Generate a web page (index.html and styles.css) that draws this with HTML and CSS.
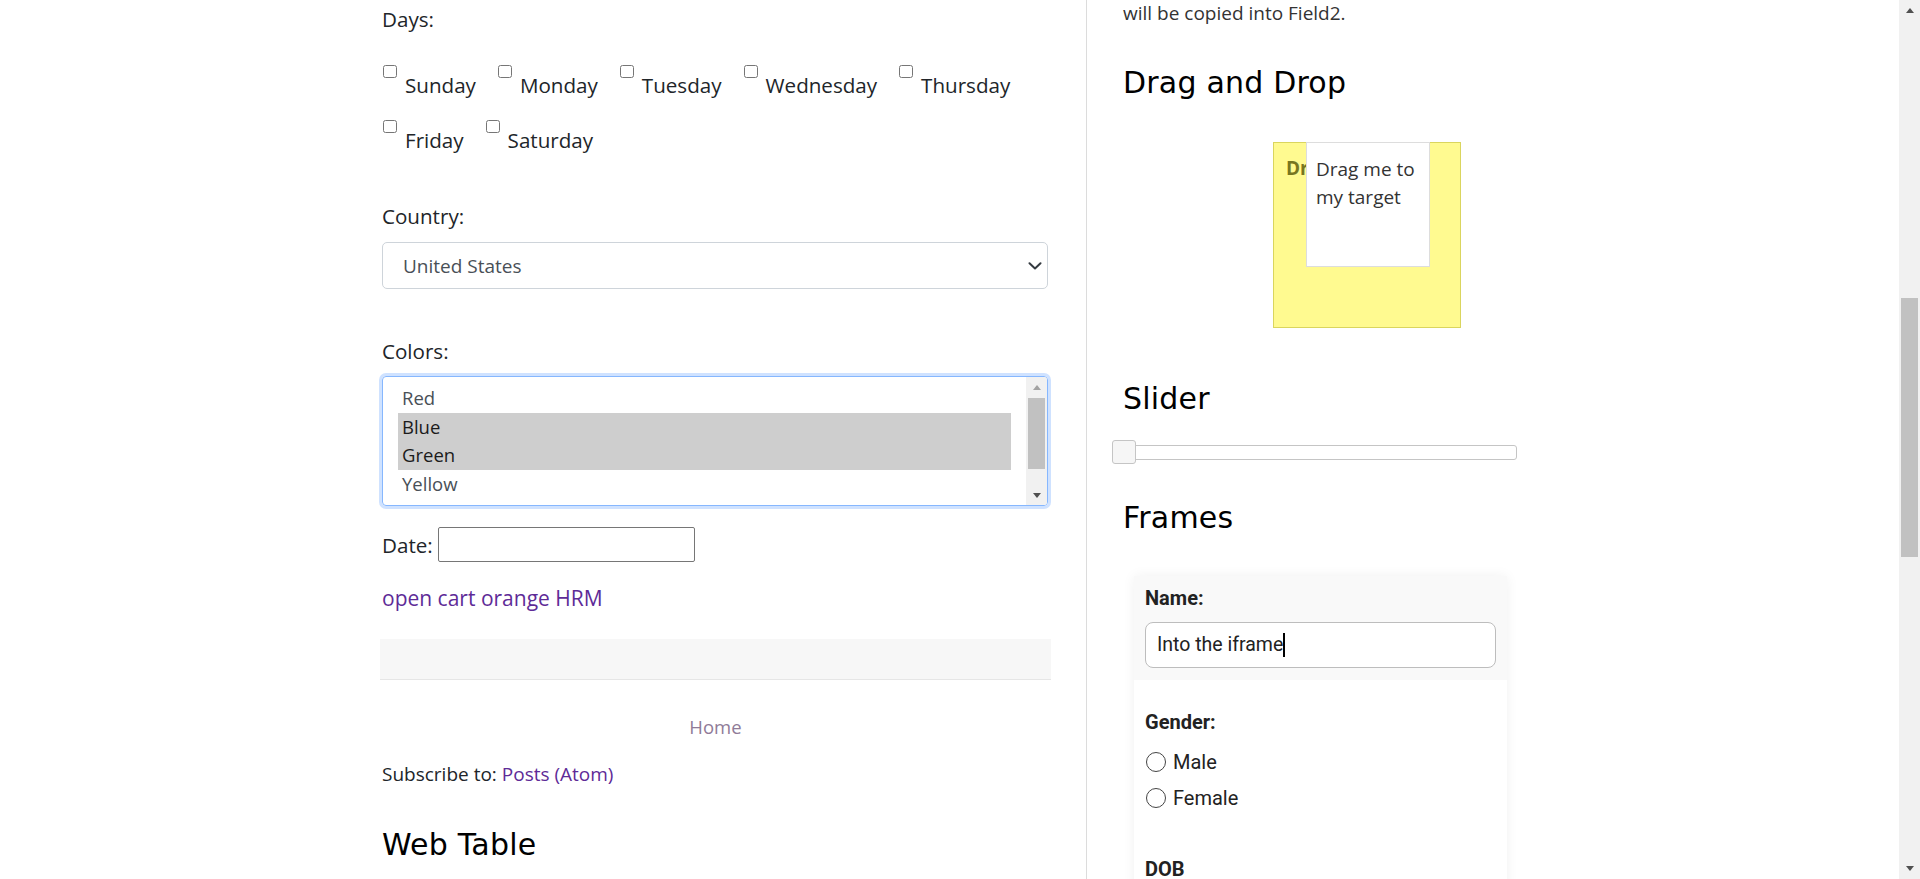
FILE: index.html
```html
<!DOCTYPE html>
<html lang="en">
<head>
<meta charset="utf-8">
<title>Automation Testing Practice</title>
<link rel="stylesheet" href="styles.css">
</head>
<body>
<div class="page">
  <main class="viewport">
    <section class="left">
      <div class="form">
        <p class="label days-label">Days:</p>
        <div class="day-row first-row">
          <label class="day"><span class="cb"></span><span class="day-text">Sunday</span></label>
          <label class="day"><span class="cb"></span><span class="day-text">Monday</span></label>
          <label class="day"><span class="cb"></span><span class="day-text">Tuesday</span></label>
          <label class="day"><span class="cb"></span><span class="day-text">Wednesday</span></label>
          <label class="day"><span class="cb"></span><span class="day-text">Thursday</span></label>
        </div>
        <div class="day-row">
          <label class="day"><span class="cb"></span><span class="day-text">Friday</span></label>
          <label class="day"><span class="cb"></span><span class="day-text">Saturday</span></label>
        </div>

        <p class="label country-label">Country:</p>
        <div class="select">
          <span>United States</span>
          <svg class="chevron" width="14" height="8" viewBox="0 0 14 8"><path d="M1.5 1.2 L7 6.4 L12.5 1.2" fill="none" stroke="#343a40" stroke-width="2" stroke-linecap="round" stroke-linejoin="round"/></svg>
        </div>

        <p class="label colors-label">Colors:</p>
        <div class="listbox">
          <div class="options">
            <div class="opt">Red</div>
            <div class="opt sel">Blue</div>
            <div class="opt sel">Green</div>
            <div class="opt">Yellow</div>
            <div class="opt">White</div>
          </div>
          <div class="lb-scroll">
            <div class="lb-btn"><span class="tri-up light"></span></div>
            <div class="lb-thumb"></div>
            <div class="lb-space"></div>
            <div class="lb-btn"><span class="tri-down"></span></div>
          </div>
        </div>

        <div class="date-row">
          <span class="label">Date:</span>
          <span class="date-input"></span>
        </div>

        <p class="links"><a class="link">open cart</a> <a class="link">orange HRM</a></p>
      </div>

      <div class="bar"></div>

      <p class="home"><a class="home-link">Home</a></p>
      <p class="subscribe">Subscribe to: <a class="link">Posts (Atom)</a></p>

      <h2 class="heading web-table">Web Table</h2>
    </section>

    <section class="right">
      <p class="para">will be copied into Field2.</p>

      <h2 class="heading dnd-title">Drag and Drop</h2>
      <div class="drop">
        <p>Drop here</p>
        <div class="drag"><p>Drag me to my target</p></div>
      </div>

      <h2 class="heading slider-title">Slider</h2>
      <div class="slider"><span class="handle"></span></div>

      <h2 class="heading frames-title">Frames</h2>
      <div class="iframe">
        <div class="card">
          <div class="name-sec">
            <div class="flabel">Name:</div>
            <div class="finput"><span>Into the iframe</span><span class="caret"></span></div>
          </div>
          <div class="sec">
            <div class="flabel gender">Gender:</div>
            <div class="radio-row male"><span class="radio"></span><span>Male</span></div>
            <div class="radio-row female"><span class="radio"></span><span>Female</span></div>
            <div class="flabel dob">DOB</div>
          </div>
        </div>
      </div>
    </section>
  </main>

  <div class="scrollbar">
    <div class="sb-btn"><span class="tri-up"></span></div>
    <div class="sb-thumb"></div>
    <div class="sb-space"></div>
    <div class="sb-btn"><span class="tri-down"></span></div>
  </div>
</div>
</body>
</html>
```
FILE: styles.css
```css
* { box-sizing: border-box; }

html, body {
  margin: 0;
  padding: 0;
  height: 100%;
  overflow: hidden;
  background: #fff;
}

body {
  font-family: "Open Sans", "Noto Sans", sans-serif;
  color: #212529;
}

p, h2 { margin: 0; }

.page {
  display: flex;
  height: 100vh;
}

.viewport {
  flex: 1;
  display: flex;
  overflow: hidden;
  padding-left: 380px;
}

/* ---------- left column ---------- */
.left {
  width: 671px;
  flex: none;
}

.form {
  padding: 0 3px 0 2px;
}

.label {
  font-size: 20.6px;
  line-height: 28px;
}

.days-label { margin-top: 5px; }

.day-row {
  display: flex;
  align-items: flex-start;
  height: 55px;
  font-size: 20.6px;
}
.first-row { margin-top: 32px; }

.day {
  display: flex;
  align-items: flex-start;
  margin-right: 21px;
}

.cb {
  width: 14px;
  height: 13px;
  margin-left: 1px;
  border: 1px solid #767676;
  border-radius: 2.5px;
  background: #fff;
}

.day-text {
  margin-left: 8px;
  padding-top: 6px;
  line-height: 28px;
}

.country-label { margin-top: 27px; }

.select {
  margin-top: 12px;
  height: 47px;
  border: 1px solid #ced4da;
  border-radius: 5px;
  padding: 0 5px 0 20px;
  display: flex;
  align-items: center;
  justify-content: space-between;
  font-size: 19px;
  line-height: 28px;
  color: #495057;
}

.chevron { display: block; }

.colors-label { margin-top: 48px; }

.listbox {
  margin-top: 11px;
  height: 130px;
  border: 1px solid #86b7fe;
  border-radius: 4px;
  box-shadow: 0 0 0 3px #cfe2ff;
  display: flex;
  overflow: hidden;
}

.options {
  flex: 1;
  padding: 7px 15px 0 15px;
  overflow: hidden;
}

.opt {
  height: 28.5px;
  line-height: 28.5px;
  padding-left: 4px;
  font-size: 18.5px;
  color: #495057;
  white-space: nowrap;
}

.opt.sel {
  background: #cecece;
  color: #1b1b1b;
}

.lb-scroll {
  width: 21px;
  background: #f1f1f1;
  display: flex;
  flex-direction: column;
  align-items: center;
}

.lb-btn {
  height: 20px;
  width: 100%;
  display: flex;
  align-items: center;
  justify-content: center;
}

.lb-thumb {
  width: 17px;
  height: 71px;
  margin-top: 1px;
  background: #c1c1c1;
}

.lb-space { flex: 1; }

.tri-up {
  width: 0;
  height: 0;
  border-left: 4.5px solid transparent;
  border-right: 4.5px solid transparent;
  border-bottom: 5px solid #505050;
}
.tri-up.light { border-bottom-color: #a3a3a3; }

.tri-down {
  width: 0;
  height: 0;
  border-left: 4.5px solid transparent;
  border-right: 4.5px solid transparent;
  border-top: 5px solid #505050;
}

.date-row {
  margin-top: 21px;
  height: 35px;
  display: flex;
  align-items: center;
}

.date-input {
  margin-left: 5px;
  width: 257px;
  height: 35px;
  border: 1px solid #767676;
  border-radius: 2px;
  background: #fff;
}

.links {
  margin-top: 22px;
  font-size: 21px;
  line-height: 28px;
}

.link {
  color: #5e2b97;
  text-decoration: none;
}

.bar {
  margin-top: 27px;
  height: 41px;
  background: #f7f7f7;
  border-bottom: 1px solid #e6e6e6;
}

.home {
  margin-top: 34px;
  text-align: center;
  font-size: 18.5px;
  line-height: 26px;
}

.home-link {
  color: #8f7b98;
  text-decoration: none;
}

.subscribe {
  margin-top: 21px;
  padding-left: 2px;
  font-size: 19px;
  line-height: 26px;
}

.heading {
  font-family: "DejaVu Sans", "Liberation Sans", sans-serif;
  font-weight: normal;
  font-size: 30px;
  letter-spacing: 0.2px;
  line-height: 34px;
  color: #000;
}

.web-table {
  margin-top: 41px;
  padding-left: 2px;
}

/* ---------- right column ---------- */
.right {
  margin-left: 35px;
  border-left: 1px solid #dcdcdc;
  padding-left: 36px;
  width: 432px;
  flex: none;
}

.para {
  margin-top: -1px;
  font-size: 19px;
  line-height: 28px;
  color: #333;
}

.dnd-title { margin-top: 39px; }

.drop {
  position: relative;
  margin-top: 42px;
  margin-left: 150px;
  width: 188px;
  height: 186px;
  background: #fffa90;
  border: 1px solid #dad55e;
  color: #777620;
  padding: 11px 12px;
  font-size: 19px;
  font-weight: bold;
  line-height: 28px;
  white-space: nowrap;
}

.drag {
  position: absolute;
  left: 32px;
  top: -1px;
  width: 124px;
  height: 125px;
  background: #fff;
  border: 1px solid #dddddd;
  color: #333;
  padding: 12px 9px;
  font-weight: normal;
  white-space: normal;
}

.slider-title { margin-top: 54px; }

.slider {
  position: relative;
  margin-top: 29px;
  width: 394px;
  height: 15px;
  border: 1px solid #c5c5c5;
  border-radius: 3px;
  background: #fff;
}

.handle {
  position: absolute;
  left: -12px;
  top: -6px;
  width: 24px;
  height: 24px;
  border: 1px solid #c5c5c5;
  border-radius: 3px;
  background: #f6f6f6;
}

.frames-title { margin-top: 41px; }

.iframe {
  margin-top: 41px;
  width: 389px;
  padding: 0 5px 0 11px;
  font-family: Roboto, "Open Sans", sans-serif;
  color: #222;
}

.card {
  background: #fff;
  box-shadow: 0 0 12px rgba(0, 0, 0, 0.06);
  height: 400px;
}

.name-sec {
  background: #f9f9f9;
  padding: 10px 11px 12px 11px;
}

.flabel {
  font-size: 20px;
  font-weight: bold;
  line-height: 24px;
  color: #222;
}

.finput {
  margin-top: 12px;
  height: 46px;
  border: 1px solid #bdbdbd;
  border-radius: 8px;
  background: #fff;
  padding-left: 11px;
  display: flex;
  align-items: center;
  font-size: 19.5px;
  line-height: 24px;
  color: #222;
}

.caret {
  width: 2px;
  height: 24px;
  background: #000;
}

.sec {
  padding: 0 11px;
}

.gender { margin-top: 30px; }

.radio-row {
  display: flex;
  align-items: center;
  height: 24px;
  font-size: 20px;
  line-height: 24px;
  color: #222;
}

.radio {
  width: 20px;
  height: 20px;
  margin-left: 1px;
  margin-right: 7px;
  border: 1.5px solid #444;
  border-radius: 50%;
  background: #fff;
}

.male { margin-top: 16px; }
.female { margin-top: 12px; }
.dob { margin-top: 47px; }

/* ---------- page scrollbar ---------- */
.scrollbar {
  width: 21px;
  flex: none;
  background: #f1f1f1;
  display: flex;
  flex-direction: column;
  align-items: center;
}

.sb-btn {
  height: 21px;
  width: 100%;
  display: flex;
  align-items: center;
  justify-content: center;
}

.sb-thumb {
  width: 17px;
  height: 259px;
  margin-top: 277px;
  background: #c1c1c1;
}

.sb-space { flex: 1; }
```
